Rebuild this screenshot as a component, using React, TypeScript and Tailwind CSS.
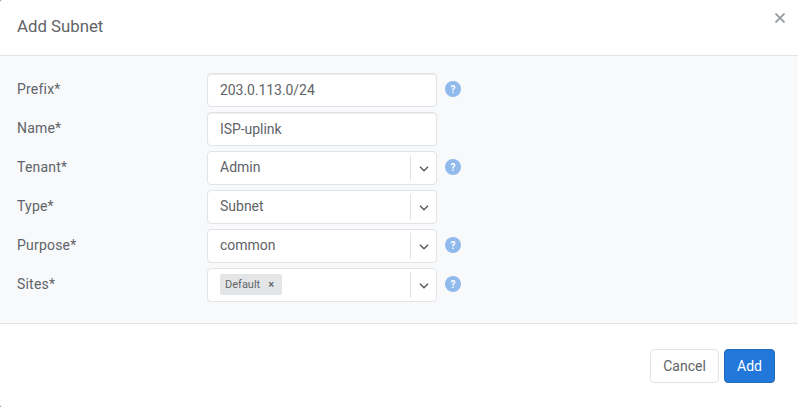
import { ReactNode } from "react";

function Help() {
  return (
    <span className="ml-2 flex size-4 items-center justify-center rounded-full bg-[#90b9ec] pt-px text-[10px] leading-4 font-bold text-white">
      ?
    </span>
  );
}

function Row({ label, help, children }: { label: string; help?: boolean; children: ReactNode }) {
  return (
    <div className="flex h-[34px] items-start">
      <label className="w-[190px] pt-1.5 leading-5 tracking-[0.2px]">{label}</label>
      {children}
      {help && (
        <div className="pt-2">
          <Help />
        </div>
      )}
    </div>
  );
}

function TextField({ value }: { value: string }) {
  return (
    <input
      type="text"
      defaultValue={value}
      className="h-[34px] w-[230px] rounded-[4px] border border-[#e1e3e6] bg-white px-3 leading-5 tracking-[-0.06px] shadow-[inset_0_1px_1px_rgba(0,0,0,0.075)] outline-none"
    />
  );
}

function Select({ children }: { children: ReactNode }) {
  return (
    <div className="flex h-[34px] w-[230px] rounded-[4px] border border-[#e1e3e6] bg-white">
      <div className="flex-1 pt-[5px] pl-3 leading-5">{children}</div>
      <div className="my-[3px] flex w-[26px] items-center justify-center border-l border-[#e1e3e6]">
        <svg width="10" height="6" viewBox="0 0 10 6" className="mt-[2px]" fill="none" stroke="#55595c" strokeWidth="1.4">
          <path d="M1 .7 5 4.7 9 .7" />
        </svg>
      </div>
    </div>
  );
}

export default function App() {
  return (
    <div className="h-[407px] w-[798px] bg-[#7d7d7d] font-[Roboto,sans-serif] text-sm text-[#5f6468]">
      <div className="flex h-full flex-col rounded-l-[2px] bg-white">
        <header className="flex h-14 items-start justify-between border-b border-[#e1e3e6] pr-[13px] pl-[17px]">
          <h1 className="pt-[15px] text-[16.8px] leading-[22px]">Add Subnet</h1>
          <button aria-label="Close" className="mt-[13px]">
            <svg width="10" height="10" viewBox="0 0 10 10" className="block" stroke="#92979a" strokeWidth="1.6">
              <path d="M.5.5 9.5 9.5M9.5.5.5 9.5" />
            </svg>
          </button>
        </header>
        <main className="flex h-[268px] flex-col gap-[5px] border-b border-[#e1e3e6] bg-[#f8f9fb] pt-[17px] pl-[17px]">
          <Row label="Prefix*" help>
            <TextField value="203.0.113.0/24" />
          </Row>
          <Row label="Name*">
            <TextField value="ISP-uplink" />
          </Row>
          <Row label="Tenant*" help>
            <Select>Admin</Select>
          </Row>
          <Row label="Type*">
            <Select>Subnet</Select>
          </Row>
          <Row label="Purpose*" help>
            <Select>common</Select>
          </Row>
          <Row label="Sites*" help>
            <Select>
              <span className="flex h-[21px] w-[62px] items-center justify-between rounded-[2px] bg-[#e3e5e7] pr-2 pl-[5px] text-[11px]">
                Default<span className="font-medium">×</span>
              </span>
            </Select>
          </Row>
        </main>
        <footer className="flex justify-end gap-[5px] pt-[25px] pr-[23px]">
          <button className="h-[34px] w-[69px] rounded-[4px] border border-[#e1e3e6] bg-white">Cancel</button>
          <button className="h-[34px] w-[51px] rounded-[4px] border border-[#206bb5] bg-[#2277da] text-white">Add</button>
        </footer>
      </div>
    </div>
  );
}
